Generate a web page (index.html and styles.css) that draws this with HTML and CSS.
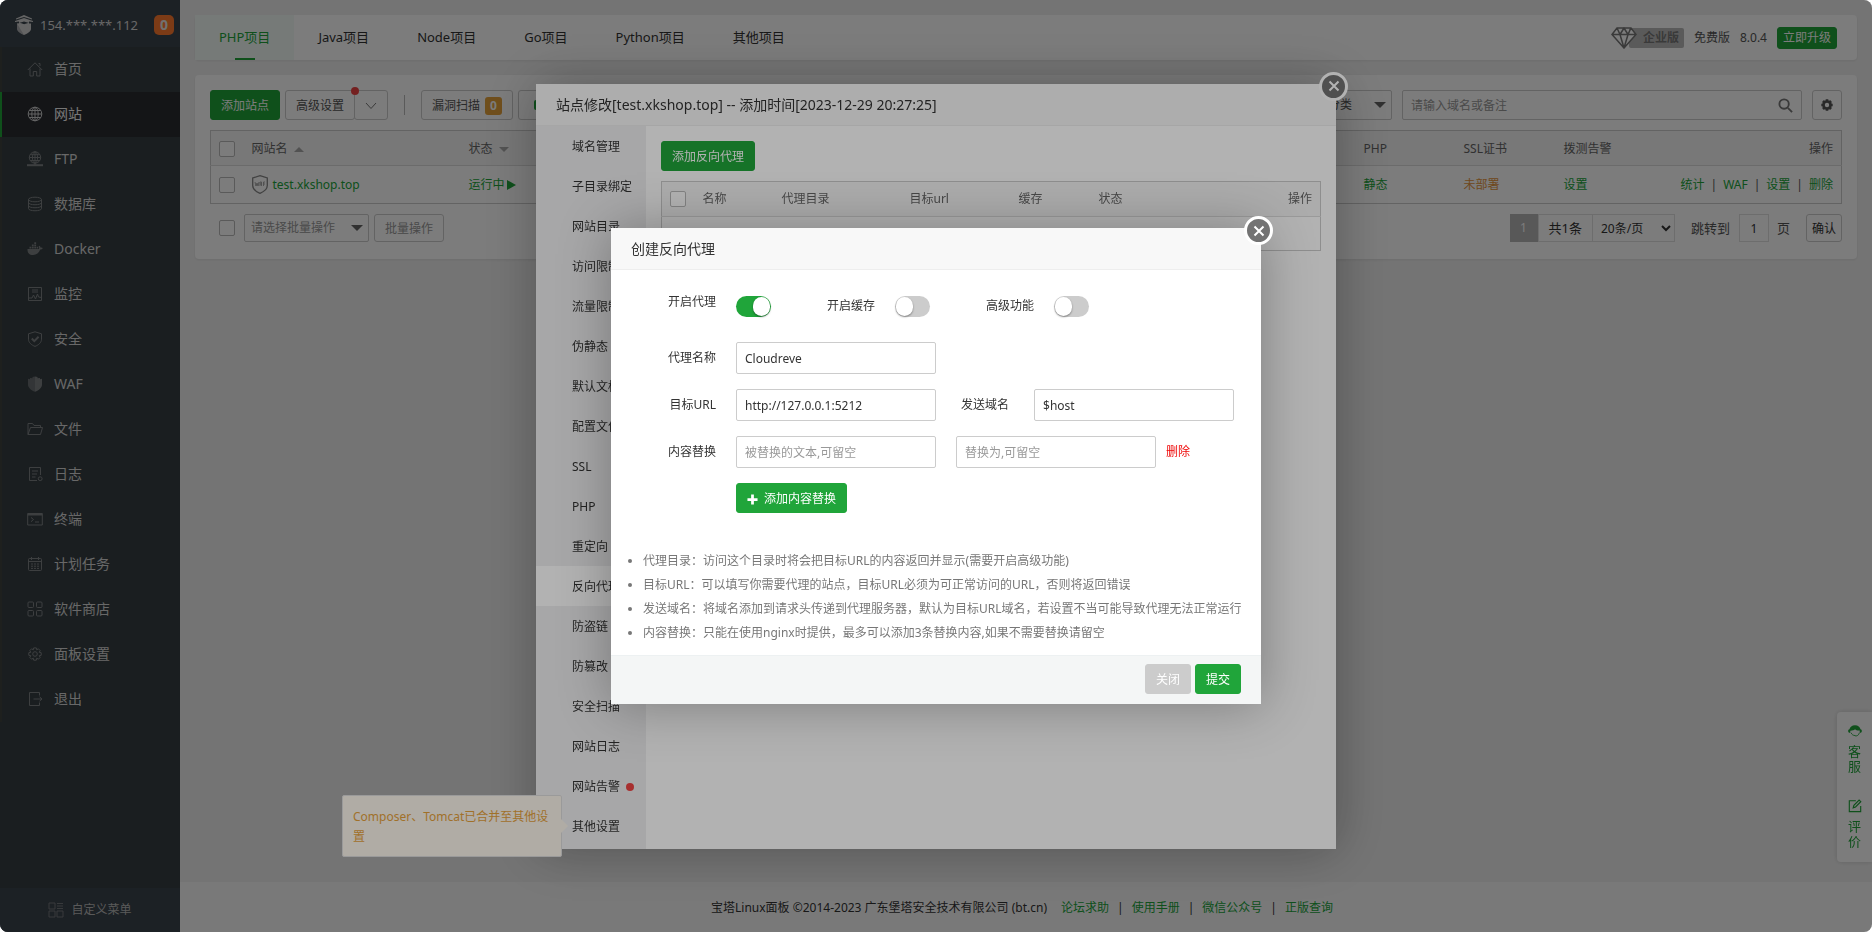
FILE: index.html
```html
<!DOCTYPE html>
<html lang="zh-CN">
<head>
<meta charset="utf-8">
<title>宝塔Linux面板</title>
<link rel="stylesheet" href="styles.css">
</head>
<body>
<div class="app">
  <aside class="sidebar">
    <div class="server">
      <svg class="server-logo" viewBox="0 0 18 20" fill="currentColor"><path d="M9 0l8 3.500v1L9 2 1 4.500v-1z"/><path d="M0 6l9-3 9 3v1l-4-.6V8L9 6.500 4 8V6.400L0 7z"/><path d="M2 8.500h2V7.800L9 9.200l5-1.400v.7h2V14c0 2.500-4 5-7 6z"/><path opacity=".75" d="M2 8.500h2V7.800L9 9.200V20c-3-1-7-3.500-7-6z"/></svg>
      <span class="server-ip">154.***.***.112</span>
      <span class="server-badge">0</span>
    </div>
    <nav class="menu">
      <a class="menu-item" href="#"><svg class="icon" viewBox="0 0 16 16"><path d="M.8 9L8 1.800 15.200 9M3 7.500V15h3.300v-4.500h3.400V15H13V7.500M11.500 2.500h1.500V5"/></svg>首页</a>
      <a class="menu-item active" href="#"><svg class="icon" viewBox="0 0 16 16"><circle cx="8" cy="8" r="6.800"/><ellipse cx="8" cy="8" rx="3.200" ry="6.800"/><path d="M1.200 8h13.600M8 1.200v13.600M2.200 4.500h11.600M2.200 11.500h11.600"/></svg>网站</a>
      <a class="menu-item" href="#"><svg class="icon" viewBox="0 0 16 16"><circle cx="8" cy="6.500" r="5.700"/><ellipse cx="8" cy="6.500" rx="2.600" ry="5.700"/><path d="M2.300 6.500h11.400M8 .8V14M3.300 3.700h9.400M3.300 9.500h9.400"/><path class="stroke-bold" d="M0 14.200h16"/></svg>FTP</a>
      <a class="menu-item" href="#"><svg class="icon" viewBox="0 0 16 16"><ellipse cx="8" cy="3.500" rx="6.500" ry="2.300"/><path d="M1.500 3.500v9c0 3 13 3 13 0v-9M1.500 6.500c0 3 13 3 13 0M1.500 9.500c0 3 13 3 13 0"/></svg>数据库</a>
      <a class="menu-item" href="#"><svg class="icon icon-fill" viewBox="0 0 16 16"><path d="M.5 8H12c.3-1 .2-2-.3-2.800l.8-.5c.8.700 1 1.300 1 2 .9-.2 1.700 0 2.300.4-.5 1.100-1.500 1.500-2.600 1.500C12 12 9.500 14 6 14 2.500 14 .3 12 .5 8zM2.500 5.700h1.800v1.700H2.500zM4.900 5.700h1.800v1.700H4.900zM7.300 5.700h1.800v1.700H7.300zM4.900 3.500h1.800v1.700H4.900zM7.300 3.500h1.800v1.700H7.300zM7.300 1.300h1.800V3H7.300zM9.700 5.700h1.500v1.700H9.700z"/></svg>Docker</a>
      <a class="menu-item" href="#"><svg class="icon" viewBox="0 0 16 16"><path d="M1.500 1.500h13v13h-13zM5 4h6M5 6h6M1.500 12H5l1.500-3 2 4 2-5 1 3 3 .5"/></svg>监控</a>
      <a class="menu-item" href="#"><svg class="icon" viewBox="0 0 16 16"><path d="M8 .8l6.500 2v5.400c0 3.500-3 5.800-6.500 7.200C4.500 14 1.500 11.700 1.500 8.200V2.800z"/><path class="stroke-bold" d="M4.800 7.500l2.500 2.600 4.300-4.300"/></svg>安全</a>
      <a class="menu-item" href="#"><svg class="icon icon-fill" viewBox="0 0 16 16"><path opacity=".7" d="M8 .5V15.800C4 14.300 1 11.800 1 8.500V2.800l2 .4V2l2.500.3V1z"/><path d="M8 .5L10.500 1v1.300L13 2v1.200l2-.4v5.700c0 3.300-3 5.800-7 7.300z"/></svg>WAF</a>
      <a class="menu-item" href="#"><svg class="icon" viewBox="0 0 16 16"><path d="M1 13.500v-11h4.500l1.500 2h6.500v2M1 13.500L3.500 6.500H15.500L13.500 13.500z"/></svg>文件</a>
      <a class="menu-item" href="#"><svg class="icon" viewBox="0 0 16 16"><path d="M13.500 9V1.500h-11v13H10M5 5h6M5 8h5M5 11h3.500"/><circle cx="13.200" cy="12.700" r="1.900"/></svg>日志</a>
      <a class="menu-item" href="#"><svg class="icon" viewBox="0 0 16 16"><path d="M.7 2.500h14.600v11.500H.7z"/><path d="M.7 3.500h14.600" class="stroke-bold"/><path d="M4 6.500l2.500 2L4 10.700M8 11h4"/></svg>终端</a>
      <a class="menu-item" href="#"><svg class="icon" viewBox="0 0 16 16"><rect x="1.500" y="2.500" width="13" height="12" rx="1"/><path d="M4.500 1v3M11.500 1v3M1.500 5.500h13M4 8h2M7 8h2M10 8h2M4 10.200h2M7 10.200h2M10 10.200h2M4 12.400h2M7 12.400h2M10 12.400h2"/></svg>计划任务</a>
      <a class="menu-item" href="#"><svg class="icon" viewBox="0 0 16 16"><rect x="1" y="1" width="5.500" height="5.500" rx="1"/><rect x="9.500" y="1" width="5.500" height="5.500" rx="1"/><rect x="1" y="9.500" width="5.500" height="5.500" rx="1"/><rect x="9.500" y="9.500" width="5.500" height="5.500" rx="1"/></svg>软件商店</a>
      <a class="menu-item" href="#"><svg class="icon" viewBox="0 0 16 16"><path d="M6.700 1h2.600l.4 1.900 1.700-1 1.800 1.800-1 1.700 2 .4v2.600l-2 .4 1 1.700-1.800 1.800-1.700-1-.4 2H6.700l-.4-2-1.700 1-1.800-1.800 1-1.700-2-.4V5.800l2-.4-1-1.700 1.800-1.800 1.700 1z" transform="translate(0 .9)"/><circle cx="8" cy="8" r="2.300"/></svg>面板设置</a>
      <a class="menu-item" href="#"><svg class="icon" viewBox="0 0 16 16"><path d="M12.500 4.500v-3h-10v13h10v-3M6.500 8h8.500M12.500 5.800L15 8l-2.500 2.200"/></svg>退出</a>
    </nav>
    <a class="custom-menu" href="#"><svg class="icon" viewBox="0 0 16 16"><path d="M1 1h6v6H1zM1 9h6v6H1zM9 9h6v6H9zM9 1.500h6M9 4h6M9 6.500h6"/></svg>自定义菜单</a>
  </aside>

  <div class="main">
    <header class="card topbar">
      <nav class="tabs">
        <a class="tab active" href="#">PHP项目</a>
        <a class="tab" href="#">Java项目</a>
        <a class="tab" href="#">Node项目</a>
        <a class="tab" href="#">Go项目</a>
        <a class="tab" href="#">Python项目</a>
        <a class="tab" href="#">其他项目</a>
      </nav>
      <div class="version">
        <span class="edition"><svg class="diamond" viewBox="0 0 26 22"><path d="M6 1h14l5 6.500L13 21 1 7.500zM1 7.500h24M6 1l3 6.500L13 21l4-13.500L20 1M9 7.500L13 1l4 6.500"/></svg><b class="edition-name">企业版</b></span>
        <span>免费版</span>
        <span>8.0.4</span>
        <button class="btn btn-primary upgrade" type="button">立即升级</button>
      </div>
    </header>

    <section class="card sites">
      <div class="toolbar">
        <button class="btn btn-primary" type="button">添加站点</button>
        <div class="btn-group">
          <button class="btn" type="button">高级设置<i class="dot group-dot"></i></button>
          <button class="btn caret" type="button" aria-label="更多"><svg class="chevron" viewBox="0 0 12 8"><path d="M1 1l5 5.500L11 1"/></svg></button>
        </div>
        <i class="divider"></i>
        <button class="btn scan" type="button">漏洞扫描<span class="count">0</span></button>
        <button class="btn extra" type="button" aria-label="扩展"><i class="chip"></i></button>
        <div class="select-wrap category">
          <select class="field select" aria-label="分类"><option>全部分类</option></select>
        </div>
        <div class="search">
          <input class="field" type="text" placeholder="请输入域名或备注" aria-label="搜索">
          <svg class="search-icon" viewBox="0 0 16 16"><circle cx="6.500" cy="6.500" r="5"/><path d="M10.500 10.500L15 15"/></svg>
        </div>
        <button class="btn gear" type="button" aria-label="设置"><svg class="gear-icon" viewBox="0 0 16 16"><circle cx="8" cy="8" r="4"/><path d="M8 1.500v2M8 12.500v2M1.500 8h2M12.500 8h2M3.400 3.400l1.400 1.400M11.200 11.200l1.400 1.400M12.600 3.400l-1.400 1.400M4.800 11.200l-1.400 1.400"/></svg></button>
      </div>

      <table class="table site-table">
        <colgroup><col class="c-check"><col class="c-name"><col class="c-status"><col><col class="c-100"><col class="c-100"><col class="c-100"><col class="c-ops"></colgroup>
        <thead><tr>
          <th><input class="check" type="checkbox" aria-label="全选"></th>
          <th>网站名<i class="sort up"></i></th><th>状态<i class="sort down"></i></th><th></th>
          <th>PHP</th><th>SSL证书</th><th>拨测告警</th><th class="right">操作</th>
        </tr></thead>
        <tbody><tr>
          <td><input class="check" type="checkbox" aria-label="选择 test.xkshop.top"></td>
          <td><div class="site-name"><svg class="waf" viewBox="0 0 16 19"><path d="M8 .7l7.300 2.300v7.500c0 3.500-3.600 6.200-7.300 7.800C4.300 16.700.7 14 .7 10.500V3z"/><path class="waf-text" d="M3 7l1 4 1-3 1 3 1-4M8 11V7h1.500v4M8 9h1.500M11.500 11V7H13M11.500 9H13"/></svg><a class="link" href="#">test.xkshop.top</a></div></td>
          <td><a class="link running" href="#">运行中<i class="play"></i></a></td><td></td>
          <td><a class="link" href="#">静态</a></td><td><a class="link warn" href="#">未部署</a></td><td><a class="link" href="#">设置</a></td>
          <td><div class="ops"><a class="link" href="#">统计</a><span>|</span><a class="link" href="#">WAF</a><span>|</span><a class="link" href="#">设置</a><span>|</span><a class="link" href="#">删除</a></div></td>
        </tr></tbody>
      </table>

      <div class="table-foot">
        <input class="check" type="checkbox" aria-label="全选本页">
        <div class="select-wrap batch"><select class="field select muted" aria-label="批量操作"><option>请选择批量操作</option></select></div>
        <button class="btn small muted" type="button">批量操作</button>
        <div class="pager">
          <span class="page-now">1</span><span class="page-total">共1条</span>
          <select class="page-size" aria-label="每页条数"><option>20条/页</option></select>
          <label class="jump-label" for="jump">跳转到</label>
          <input class="jump" id="jump" type="text" value="1">
          <span class="page-unit">页</span>
          <button class="btn small confirm" type="button">确认</button>
        </div>
      </div>
    </section>

    <footer class="footer">
      <span class="copyright">宝塔Linux面板 ©2014-2023 广东堡塔安全技术有限公司 (bt.cn)</span>
      <a class="link" href="#">论坛求助</a><span>|</span><a class="link" href="#">使用手册</a><span>|</span><a class="link" href="#">微信公众号</a><span>|</span><a class="link" href="#">正版查询</a>
    </footer>
  </div>

  <aside class="service">
    <a class="service-item" href="#"><svg class="service-icon" viewBox="0 0 16 16"><path fill="currentColor" d="M8 1.500c3.500 0 5.800 2 6.300 4.600 1 .2 1.500.8 1.500 2 0 1.300-.6 2-1.800 2h-.6V7.500C11 7.800 9 7 8 6c-1.500 1.200-3.300 1.700-5.400 1.600v2.500H2C.8 10.100.2 9.400.2 8.100c0-1.200.5-1.800 1.500-2C2.200 3.500 4.500 1.500 8 1.500z"/><path fill="none" stroke="currentColor" d="M3.500 10c.8 2 2.500 3.200 4.500 3.200M13 10c-.5 2-1.500 3-3 3.500H8"/></svg>客服</a>
    <a class="service-item" href="#"><svg class="service-icon" viewBox="0 0 16 16"><path fill="none" stroke="currentColor" stroke-width="1.300" d="M9 2H1.500v12.500h13V8M6 10l.7-2.800 6-6 1.900 1.900-6 6z"/></svg>评价</a>
  </aside>
</div>

<div class="shade">
  <section class="modal modal-site" role="dialog" aria-label="站点修改">
    <h2 class="modal-title">站点修改[test.xkshop.top] -- 添加时间[2023-12-29 20:27:25]</h2>
    <button class="close" type="button" aria-label="关闭"><svg class="close-icon" viewBox="0 0 12 12"><path d="M1.500 1.500l9 9M10.500 1.500l-9 9"/></svg></button>
    <div class="site-body">
      <nav class="site-menu">
        <a class="site-item" href="#">域名管理</a>
        <a class="site-item" href="#">子目录绑定</a>
        <a class="site-item" href="#">网站目录</a>
        <a class="site-item" href="#">访问限制</a>
        <a class="site-item" href="#">流量限制</a>
        <a class="site-item" href="#">伪静态</a>
        <a class="site-item" href="#">默认文档</a>
        <a class="site-item" href="#">配置文件</a>
        <a class="site-item" href="#">SSL</a>
        <a class="site-item" href="#">PHP</a>
        <a class="site-item" href="#">重定向</a>
        <a class="site-item active" href="#">反向代理</a>
        <a class="site-item" href="#">防盗链</a>
        <a class="site-item" href="#">防篡改</a>
        <a class="site-item" href="#">安全扫描</a>
        <a class="site-item" href="#">网站日志</a>
        <a class="site-item" href="#">网站告警<i class="dot"></i></a>
        <a class="site-item" href="#">其他设置<span class="tip">Composer、Tomcat已合并至其他设置</span></a>
      </nav>
      <div class="site-content">
        <button class="btn btn-primary" type="button">添加反向代理</button>
        <table class="table proxy-table">
          <colgroup><col class="p-check"><col class="p-name"><col class="p-dir"><col class="p-url"><col class="p-cache"><col><col></colgroup>
          <thead><tr><th><input class="check" type="checkbox" aria-label="全选代理"></th><th>名称</th><th>代理目录</th><th>目标url</th><th>缓存</th><th>状态</th><th class="right">操作</th></tr></thead>
          <tbody><tr><td colspan="7"></td></tr></tbody>
        </table>
      </div>
    </div>
  </section>
</div>

<div class="shade">
  <section class="modal modal-proxy" role="dialog" aria-label="创建反向代理">
    <h2 class="modal-title">创建反向代理</h2>
    <button class="close" type="button" aria-label="关闭"><svg class="close-icon" viewBox="0 0 12 12"><path d="M1.500 1.500l9 9M10.500 1.500l-9 9"/></svg></button>
    <form class="form">
      <div class="row row-switch">
        <label class="label label-top" for="sw-on">开启代理</label>
        <input class="switch" id="sw-on" type="checkbox" checked>
        <div class="switch-pair"><label for="sw-cache">开启缓存</label><input class="switch" id="sw-cache" type="checkbox"></div>
        <div class="switch-pair"><label for="sw-adv">高级功能</label><input class="switch" id="sw-adv" type="checkbox"></div>
      </div>
      <div class="row"><label class="label" for="pname">代理名称</label><input class="field input" id="pname" type="text" value="Cloudreve"></div>
      <div class="row"><label class="label" for="purl">目标URL</label><input class="field input" id="purl" type="text" value="http://127.0.0.1:5212"><label class="label-second" for="phost">发送域名</label><input class="field input" id="phost" type="text" value="$host"></div>
      <div class="row"><label class="label" for="rfrom">内容替换</label><input class="field input" id="rfrom" type="text" placeholder="被替换的文本,可留空"><input class="field input" type="text" placeholder="替换为,可留空" aria-label="替换为"><a class="remove" href="#">删除</a></div>
      <div class="row"><span class="label"></span><button class="btn btn-primary" type="button"><svg class="plus" viewBox="0 0 12 12"><path d="M6 .5v11M.5 6h11"/></svg>添加内容替换</button></div>
    </form>
    <ul class="notes">
      <li>代理目录：访问这个目录时将会把目标URL的内容返回并显示(需要开启高级功能)</li>
      <li>目标URL：可以填写你需要代理的站点，目标URL必须为可正常访问的URL，否则将返回错误</li>
      <li>发送域名：将域名添加到请求头传递到代理服务器，默认为目标URL域名，若设置不当可能导致代理无法正常运行</li>
      <li>内容替换：只能在使用nginx时提供，最多可以添加3条替换内容,如果不需要替换请留空</li>
    </ul>
    <div class="modal-foot"><button class="btn btn-grey" type="button">关闭</button><button class="btn btn-primary" type="button">提交</button></div>
  </section>
</div>
</body>
</html>
```
FILE: styles.css
```css
* { box-sizing: border-box; }
html { height: 100%; background: #fff; }
body {
  margin: 0;
  min-height: 100%;
  display: flex;
  position: relative;
  border-radius: 8px;
  overflow: hidden;
  font: 12px/20px "Noto Sans", "Noto Sans CJK SC", sans-serif;
  color: #555;
}
button, input, select { font: inherit; color: inherit; margin: 0; }
a { text-decoration: none; color: inherit; }
svg { display: block; flex: none; }

.app { flex: 1; display: flex; min-height: 100vh; background: #f0f0f0; }

/* sidebar */
.sidebar { width: 180px; flex: none; display: flex; flex-direction: column; background: #373f43; color: #d6d6d6; font-size: 14px; }
.server { display: flex; align-items: center; height: 47px; padding: 2px 6px 0 15px; background: #3c454d; }
.server-logo { width: 18px; height: 20px; margin-right: 7px; color: #d0d0d0; }
.server-ip { flex: 1; white-space: nowrap; font-size: 13px; }
.server-badge { width: 20px; height: 20px; border-radius: 5px; background: #ff7a2f; text-align: center; font-weight: bold; color: #e8e8e8; }
.menu { flex: 1; }
.menu-item { display: flex; align-items: center; gap: 11px; height: 45px; padding: 0 0 2px 25px; border-left: 2px solid #3f433f; }
.menu-item.active { background: #2b2d32; border-color: #20a53a; color: #f4f4f4; }
.icon { width: 16px; height: 16px; fill: none; stroke: currentColor; opacity: .45; }
.active .icon { opacity: .8; }
.icon-fill { fill: currentColor; stroke: none; }
.stroke-bold { stroke-width: 2; }
.custom-menu { display: flex; align-items: center; justify-content: center; gap: 7px; height: 44px; background: #3c454d; font-size: 12px; color: #b8b8b8; }

/* main column */
.main { flex: 1; min-width: 0; display: flex; flex-direction: column; }
.card { margin: 15px 15px 0; background: #fff; border-radius: 4px; box-shadow: 0 1px 3px rgba(0, 0, 0, .08); }
.topbar { display: flex; justify-content: space-between; height: 45px; }
.tabs { display: flex; font-size: 13px; color: #333; }
.tab { position: relative; display: flex; align-items: center; padding: 0 24px 2px; }
.tab.active { background: #f3fbf7; color: #20a53a; }
.tab.active::after { content: ""; position: absolute; left: 50%; bottom: 0; width: 20px; height: 2px; margin-left: -10px; background: #20a53a; }
.version { display: flex; align-items: center; gap: 10px; padding-right: 20px; }
.edition { display: flex; align-items: center; }
.diamond { position: relative; width: 26px; height: 22px; margin-right: -8px; fill: #fff; stroke: #777; stroke-width: 1.5; }
.edition-name { height: 20px; padding: 0 5px 0 14px; background: #bbb; color: #777; border-radius: 2px; }

.btn { display: inline-flex; align-items: center; justify-content: center; height: 30px; padding: 2px 10px 0; border: 1px solid #ccc; border-radius: 3px; background: #fff; white-space: nowrap; }
.btn-primary { background: #20a53a; border-color: #20a53a; color: #fff; }
.btn-grey { background: #ccc; border-color: #ccc; color: #fff; }
.small { height: 28px; }
.upgrade { height: 22px; padding: 0 5px; }

.sites { padding: 15px; }
.toolbar { display: flex; align-items: center; gap: 5px; margin-bottom: 10px; }
.btn-group { display: flex; position: relative; }
.btn-group .btn + .btn { margin-left: -1px; }
.caret { width: 34px; }
.chevron { width: 12px; height: 8px; fill: none; stroke: #777; }
.dot { display: inline-block; width: 8px; height: 8px; border-radius: 50%; background: #ef4444; }
.group-dot { position: absolute; right: 29px; top: -3px; }
.divider { width: 1px; height: 20px; margin: 0 11px; background: #bbb; }
.scan { gap: 5px; }
.count { width: 17px; height: 18px; line-height: 18px; border-radius: 3px; background: #e6a23c; color: #fff; font-weight: bold; }
.extra { width: 110px; justify-content: flex-start; padding: 0 0 0 15px; }
.chip { width: 14px; height: 10px; background: #20a53a; border-radius: 2px; }
.field { width: 100%; border: 1px solid #ccc; border-radius: 2px; background: #fff; outline: none; }
.field::placeholder { color: #999; }
.select { appearance: none; height: 100%; }
.select-wrap { position: relative; height: 30px; }
.select-wrap::after { content: ""; position: absolute; right: 6px; top: 50%; margin-top: -3px; border: 6px solid transparent; border-top-color: #666; border-bottom: 0; }
.category { width: 110px; margin-left: auto; }
.category .select { padding-left: 21px; }
.search { position: relative; width: 400px; margin: 0 5px; }
.search .field { height: 30px; padding: 0 8px; display: block; }
.search-icon { position: absolute; right: 9px; top: 8px; width: 15px; height: 15px; fill: none; stroke: #777; stroke-width: 2; }
.gear { width: 30px; padding: 0; }
.gear-icon { width: 14px; height: 14px; fill: none; stroke: #555; stroke-width: 3; }

/* tables */
.table { width: 100%; table-layout: fixed; border-collapse: collapse; border: 1px solid #ccc; }
.table th { height: 35px; padding: 1px 8px 0; background: #f6f6f6; text-align: left; font-weight: normal; color: #666; border-bottom: 1px solid #ddd; }
.table td { height: 38px; padding: 0 8px; }
.table .right { text-align: right; }
.check { appearance: none; display: block; width: 16px; height: 16px; border: 1px solid #bbb; border-radius: 2px; background: #fff; flex: none; }
.c-check { width: 33px; }
.c-name { width: 217px; }
.c-status { width: 100px; }
.c-100 { width: 100px; }
.c-ops { width: 186px; }
.sort { display: inline-block; margin-left: 6px; vertical-align: middle; border: 5px solid transparent; }
.sort.up { border-bottom-color: #aaa; border-top: 0; }
.sort.down { border-top-color: #aaa; border-bottom: 0; }
.link { color: #20a53a; }
.warn { color: #e6953c; }
.site-name { display: flex; align-items: center; gap: 5px; }
.waf { width: 16px; height: 19px; fill: none; stroke: #888; stroke-width: 1.3; }
.waf-text { stroke-width: .7; }
.running { display: flex; align-items: center; gap: 2px; }
.play { border: 5px solid transparent; border-left: 9px solid #20a53a; border-right: 0; }
.ops { display: flex; justify-content: flex-end; gap: 6px; }

.table-foot { display: flex; align-items: center; height: 28px; margin: 10px 0 2px; padding-left: 9px; }
.muted { color: #999; }
.batch { width: 125px; height: 28px; margin: 0 5px 0 9px; }
.batch .select { padding-left: 6px; }
.pager { display: flex; align-items: center; margin-left: auto; }
.page-now, .page-total, .page-size, .jump { height: 28px; line-height: 26px; border: 1px solid #e0e0e0; background: #fff; color: #333; }
.page-now { width: 28px; text-align: center; background: #b5b5b5; border-color: #b5b5b5; color: #fff; }
.page-total { padding: 0 10px; font-size: 13px; }
.page-size { width: 83px; margin-left: -1px; padding-left: 4px; border-radius: 0; }
.jump-label, .page-unit { font-size: 13px; }
.jump-label { margin: 0 9px 0 16px; }
.jump { width: 30px; text-align: center; padding: 0; }
.page-unit { margin: 0 16px 0 8px; }
.confirm { padding-left: 5px; padding-right: 5px; color: #333; }

.footer { display: flex; align-items: center; justify-content: center; gap: 8px; height: 50px; margin-top: auto; padding: 2px 8px 0 0; background: #fafafa; color: #333; }
.copyright { margin-right: 6px; }

.service { position: fixed; right: 0; bottom: 70px; width: 35px; background: #fff; border-radius: 4px 0 0 4px; box-shadow: 0 0 5px rgba(0, 0, 0, .15); }
.service-item { display: flex; flex-direction: column; align-items: center; gap: 6px; width: 13px; height: 75px; margin: 0 auto; padding-top: 12px; color: #20a53a; font-size: 13px; line-height: 15px; word-break: break-all; }
.service-icon { width: 14px; height: 14px; }

/* dialogs */
.shade { position: fixed; inset: 0; display: flex; align-items: center; justify-content: center; background: rgba(0, 0, 0, .3); border-radius: 8px; }
.modal { position: relative; background: #fff; box-shadow: 1px 1px 50px rgba(0, 0, 0, .3); color: #333; }
.modal-title { margin: 0; height: 42px; padding: 0 20px; line-height: 41px; font-size: 14px; font-weight: normal; background: #f8f8f8; border-bottom: 1px solid #eee; }
.close { position: absolute; right: -12px; top: -12px; width: 29px; height: 29px; display: flex; align-items: center; justify-content: center; padding: 0; border: 3px solid #fff; border-radius: 50%; background: #737373; }
.close-icon { width: 12px; height: 12px; fill: none; stroke: #fff; stroke-width: 2; }
.modal-site { width: 800px; }
.site-body { display: flex; min-height: 723px; }
.site-menu { width: 110px; flex: none; background: #f0f0f1; }
.site-item { position: relative; display: flex; align-items: center; gap: 6px; height: 40px; padding: 2px 0 0 36px; white-space: nowrap; }
.site-item.active { background: #fff; }
.tip { position: absolute; right: 84px; top: 50%; transform: translateY(-50%); width: 220px; padding: 11px 10px 9px; border: 1px solid #ddd; border-radius: 2px; background: #fdf6ec; color: #e6a23c; white-space: normal; word-break: break-all; }
.tip::after { content: ""; position: absolute; left: 100%; top: 50%; margin-top: -7px; border: 7px solid transparent; border-left-color: #fdf6ec; border-right: 0; }
.site-content { flex: 1; padding: 15px; }
.proxy-table { margin-top: 10px; }
.proxy-table td { height: 34px; }
.p-check { width: 33px; }
.p-name { width: 79px; }
.p-dir { width: 128px; }
.p-url { width: 109px; }
.p-cache { width: 80px; }

.modal-proxy { width: 650px; }
.form { display: grid; gap: 15px; padding: 20px 20px 36px 0; }
.row { display: flex; align-items: center; gap: 20px; }
.row-switch { height: 32px; margin-bottom: 5px; }
.label { width: 105px; flex: none; text-align: right; }
.label-top { align-self: flex-start; line-height: 24px; }
.label-second { margin: 0 5px; }
.input { width: 200px; height: 32px; padding: 0 8px; }
.switch-pair { display: flex; align-items: center; gap: 20px; margin-left: 36px; }
.switch { appearance: none; display: flex; align-items: center; width: 35px; height: 21px; padding: 1px; border-radius: 11px; background: #ccc; }
.switch::before { content: ""; width: 17px; height: 19px; border-radius: 10px; background: #fff; box-shadow: 0 1px 2px rgba(0, 0, 0, .4); }
.switch:checked { justify-content: flex-end; background: #20a53a; }
.remove { color: #ef0808; margin-left: -10px; }
.plus { width: 11px; height: 11px; margin-right: 6px; fill: none; stroke: #fff; stroke-width: 3; }
.notes { margin: 0; padding: 0 10px 10px 32px; line-height: 24px; color: #777; }
.modal-foot { display: flex; justify-content: flex-end; gap: 4px; padding: 8px 20px 10px; border-top: 1px solid #edf1f2; background: #f4f6f6; }
```
